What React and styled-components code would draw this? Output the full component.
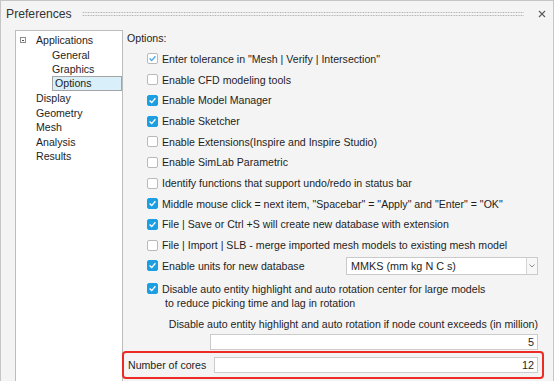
import React from 'react'
import styled, { createGlobalStyle } from 'styled-components'

const GlobalStyle = createGlobalStyle`
    html, body {
        margin: 0;
        padding: 0;
        background: #f4f4f4;
    }
    body {
        font-family: 'Liberation Sans', Arial, sans-serif;
        color: #1e1e1e;
    }
`

const treeItems = [
    { label: 'Applications', level: 0, expander: true },
    { label: 'General', level: 1 },
    { label: 'Graphics', level: 1 },
    { label: 'Options', level: 1, selected: true },
    { label: 'Display', level: 0 },
    { label: 'Geometry', level: 0 },
    { label: 'Mesh', level: 0 },
    { label: 'Analysis', level: 0 },
    { label: 'Results', level: 0 },
]

const options = [
    { label: 'Enter tolerance in "Mesh | Verify | Intersection"', state: 'disabled' },
    { label: 'Enable CFD modeling tools', state: 'off' },
    { label: 'Enable Model Manager', state: 'on' },
    { label: 'Enable Sketcher', state: 'on' },
    { label: 'Enable Extensions(Inspire and Inspire Studio)', state: 'off' },
    { label: 'Enable SimLab Parametric', state: 'off' },
    { label: 'Identify functions that support undo/redo in status bar', state: 'off' },
    { label: 'Middle mouse click = next item, "Spacebar" = "Apply" and "Enter" = "OK"', state: 'on' },
    { label: 'File | Save or Ctrl +S will create new database with extension', state: 'on' },
    { label: 'File | Import | SLB - merge imported mesh models to existing mesh model', state: 'off' },
]

function CheckBox({ state }) {
    return (
        <Box $state={state}>
            {state !== 'off' && (
                <svg width="9" height="9" viewBox="0 0 9 9">
                    <path
                        d="M1.6 4.6 L3.7 6.6 L7.4 2.2"
                        fill="none"
                        stroke={state === 'on' ? '#ffffff' : '#4aa8e6'}
                        strokeWidth="1.4"
                    />
                </svg>
            )}
        </Box>
    )
}

function App() {
    return (
        <>
            <GlobalStyle />
            <Window>
                <TitleBar>
                    <Title>Preferences</Title>
                    <Grip />
                    <Close>
                        <svg width="8" height="8" viewBox="0 0 8 8">
                            <path d="M1 1 L7 7 M7 1 L1 7" stroke="#5a5a5a" strokeWidth="1.1" />
                        </svg>
                    </Close>
                </TitleBar>
                <Body>
                    <Tree>
                        {treeItems.map((item) => (
                            <TreeRow key={item.label} $level={item.level}>
                                {item.expander && <Expander />}
                                {item.selected ? (
                                    <Selected>{item.label}</Selected>
                                ) : (
                                    <span>{item.label}</span>
                                )}
                            </TreeRow>
                        ))}
                    </Tree>
                    <Content>
                        <SectionLabel>Options:</SectionLabel>
                        <List>
                            {options.map((opt) => (
                                <Row key={opt.label}>
                                    <CheckBox state={opt.state} />
                                    <Label>{opt.label}</Label>
                                </Row>
                            ))}
                            <Row>
                                <CheckBox state="on" />
                                <Label>Enable units for new database</Label>
                                <Combo>
                                    <ComboText>MMKS (mm kg N C s)</ComboText>
                                    <ComboArrow>
                                        <svg width="6" height="4" viewBox="0 0 6 4">
                                            <path d="M0.5 0.5 L3 3 L5.5 0.5" fill="none" stroke="#8a8a8a" strokeWidth="1" />
                                        </svg>
                                    </ComboArrow>
                                </Combo>
                            </Row>
                        </List>
                        <MultiRow>
                            <CheckBox state="on" />
                            <MultiText>
                                <Line>Disable auto entity highlight and auto rotation center for large models</Line>
                                <Line $indent>to reduce picking time and lag in rotation</Line>
                            </MultiText>
                        </MultiRow>
                        <FieldCaption>
                            Disable auto entity highlight and auto rotation if node count exceeds (in million)
                        </FieldCaption>
                        <NumberField $width={328} $top={3}>5</NumberField>
                        <Highlight>
                            <Label>Number of cores</Label>
                            <NumberField $width={324}>12</NumberField>
                        </Highlight>
                    </Content>
                </Body>
            </Window>
        </>
    )
}

export default App

const Window = styled.div`
    width: 554px;
    height: 381px;
    box-sizing: border-box;
    border: 1px solid #c6c6c6;
    border-bottom: none;
    background: #f4f4f4;
    display: flex;
    flex-direction: column;
    overflow: hidden;
`
const TitleBar = styled.div`
    flex: none;
    height: 26px;
    display: flex;
    align-items: center;
    padding: 0 7px 0 5px;
`
const Title = styled.div`
    font-size: 12.2px;
    color: #333333;
`
const Grip = styled.div`
    flex: 1;
    height: 6px;
    margin: 0 14px 0 10px;
    background-image: radial-gradient(circle, #b0b0b0 0.6px, transparent 1px);
    background-size: 2.6px 3px;
`
const Close = styled.div`
    width: 8px;
    height: 8px;
    display: flex;
`
const Body = styled.div`
    flex: 1;
    display: flex;
    padding: 3px 0 0 14px;
    min-height: 0;
`
const Tree = styled.div`
    width: 108px;
    box-sizing: border-box;
    background: #ffffff;
    border: 1px solid #bcbcbc;
    border-bottom: none;
    padding-top: 1.75px;
    font-size: 10.6px;
`
const TreeRow = styled.div`
    height: 14.5px;
    display: flex;
    align-items: center;
    padding-left: ${(p) => (p.$level === 1 ? 36 : 20)}px;
    position: relative;
`
const Expander = styled.span`
    position: absolute;
    left: 4px;
    top: 4.5px;
    width: 4px;
    height: 4px;
    border: 1px solid #8c8c8c;
    &::after {
        content: '';
        position: absolute;
        left: 1px;
        right: 1px;
        top: 1.5px;
        height: 1px;
        background: #555555;
    }
`
const Selected = styled.span`
    flex: 1;
    height: 14.5px;
    box-sizing: border-box;
    line-height: 12.5px;
    border: 1px solid #a4a4a4;
    background: #d9f0fb;
    padding-left: 2px;
`
const Content = styled.div`
    flex: 1;
    display: flex;
    flex-direction: column;
    padding: 0 15px 0 4px;
    font-size: 10.6px;
`
const SectionLabel = styled.div`
    line-height: 16px;
`
const List = styled.div`
    margin-top: 2.65px;
    display: flex;
    flex-direction: column;
`
const Row = styled.div`
    height: 20.7px;
    display: flex;
    align-items: center;
    padding-left: 20px;
`
const Box = styled.span`
    flex: none;
    width: 11px;
    height: 11px;
    box-sizing: border-box;
    border-radius: 2px;
    margin-right: 4px;
    display: flex;
    align-items: center;
    justify-content: center;
    background: ${(p) => (p.$state === 'on' ? '#1c9fe2' : '#ffffff')};
    border: 1px solid ${(p) => (p.$state === 'on' ? '#1c9fe2' : '#b9b9b9')};
`
const Label = styled.span`
    white-space: nowrap;
`
const Combo = styled.div`
    margin-left: auto;
    width: 192px;
    height: 18px;
    box-sizing: border-box;
    border: 1px solid #cacaca;
    background: #ffffff;
    display: flex;
    align-items: stretch;
`
const ComboText = styled.span`
    flex: 1;
    display: flex;
    align-items: center;
    padding-left: 4px;
    font-size: 10.8px;
`
const ComboArrow = styled.span`
    width: 10px;
    border-left: 1px solid #d4d4d4;
    background: #f7f7f7;
    display: flex;
    align-items: center;
    justify-content: center;
`
const MultiRow = styled.div`
    margin-top: 5.65px;
    display: flex;
    align-items: flex-start;
    padding-left: 20px;
    & > span:first-child {
        margin-top: 1.5px;
    }
`
const MultiText = styled.div`
    display: flex;
    flex-direction: column;
`
const Line = styled.span`
    line-height: 14px;
    white-space: nowrap;
    padding-left: ${(p) => (p.$indent ? 3 : 0)}px;
`
const FieldCaption = styled.div`
    margin-top: 7px;
    line-height: 14px;
    text-align: right;
    white-space: nowrap;
`
const NumberField = styled.div`
    margin-top: ${(p) => p.$top || 0}px;
    margin-left: auto;
    width: ${(p) => p.$width}px;
    height: 16px;
    box-sizing: border-box;
    border: 1px solid #cbcbcb;
    background: #ffffff;
    display: flex;
    align-items: center;
    justify-content: flex-end;
    padding-right: 3px;
    font-size: 10.8px;
`
const Highlight = styled.div`
    margin: 1px -6px 0 -5px;
    height: 28px;
    box-sizing: border-box;
    border: 2px solid #ee2a24;
    border-radius: 4px;
    display: flex;
    align-items: center;
    padding: 0 4px;
`
